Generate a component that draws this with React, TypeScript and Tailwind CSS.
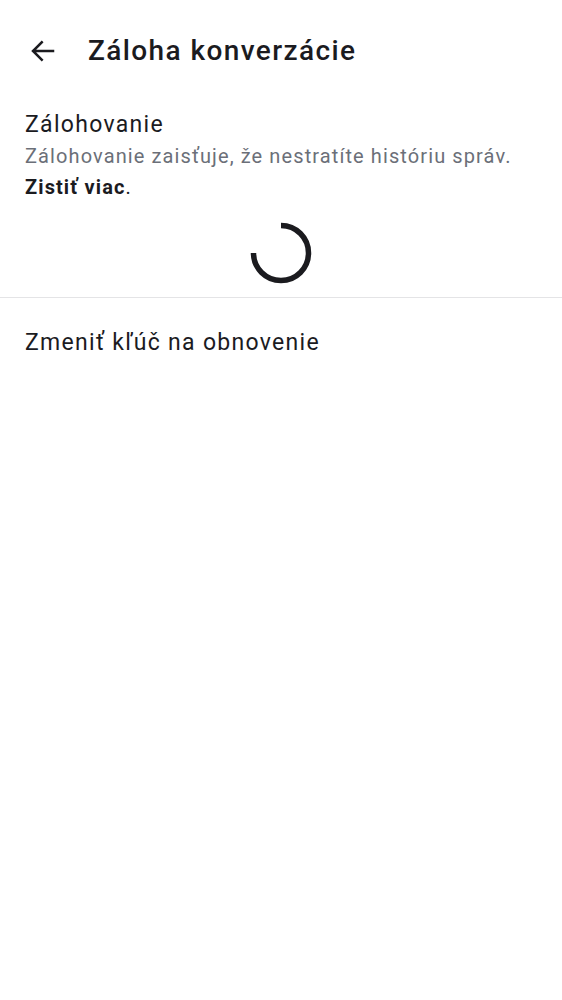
import React from 'react';

export default function App() {
  return (
    <div className="w-[562px] h-[1000px] bg-white text-[#1b1b1f] font-['Roboto',sans-serif]">
      <header className="flex items-center h-[101px] pt-[1px] pl-[28px]">
        <svg width="30" height="30" viewBox="0 0 24 24" fill="none" stroke="#1b1b1f" strokeWidth="2" strokeLinecap="square">
          <path d="M20 12H5M11 5l-7 7 7 7" />
        </svg>
        <h1 className="ml-[30px] text-[28px] font-medium leading-none tracking-[1.4px]">Záloha konverzácie</h1>
      </header>

      <div className="px-[25px] pt-[8px]">
        <div className="text-[23px] leading-[32px] tracking-[1.3px]">Zálohovanie</div>
        <p className="text-[20px] leading-[31px] tracking-[1.1px] text-[#6b6f78]">
          Zálohovanie zaisťuje, že nestratíte históriu správ.
          <br />
          <span className="font-bold text-[#1b1b1f]">Zistiť viac</span>
          <span className="text-[#1b1b1f]">.</span>
        </p>
      </div>

      <div className="flex justify-center pt-[18px] pb-[12px]">
        <svg width="64" height="64" viewBox="0 0 64 64">
          <path d="M32 4.5 A27.5 27.5 0 1 1 4.5 32" fill="none" stroke="#1b1b1f" strokeWidth="5.5" />
        </svg>
      </div>

      <div className="h-px bg-[#e4e4e6]" />

      <div className="px-[25px] pt-[29px] text-[23px] leading-[32px] tracking-[1.3px]">Zmeniť kľúč na obnovenie</div>
    </div>
  );
}
